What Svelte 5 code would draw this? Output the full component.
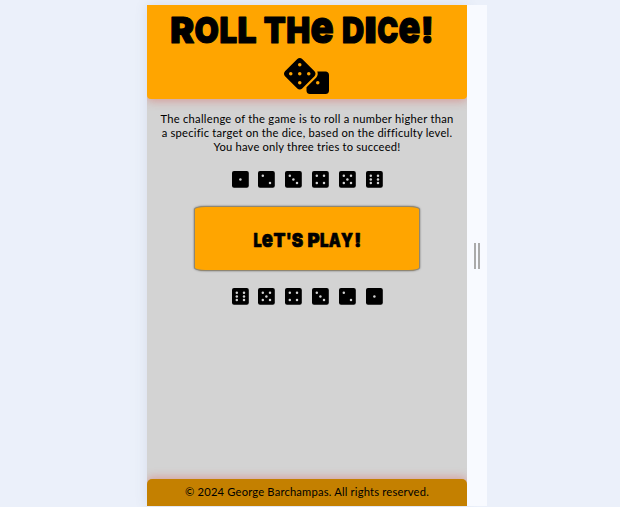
<script>
  const pips = {
    1: [[224, 256]],
    2: [[128, 160], [320, 352]],
    3: [[128, 160], [224, 256], [320, 352]],
    4: [[128, 160], [320, 160], [128, 352], [320, 352]],
    5: [[128, 160], [320, 160], [224, 256], [128, 352], [320, 352]],
    6: [[128, 160], [320, 160], [128, 256], [320, 256], [128, 352], [320, 352]],
  };
  const up = [1, 2, 3, 4, 5, 6];
  const down = [6, 5, 4, 3, 2, 1];

  // glyph, left edge, advance
  const title = [
    ['R', 23.2, 24], ['O', 47.6, 24.4], ['L', 72.4, 17.6], ['L', 90.6, 19],
    ['T', 116.8, 22], ['H', 139.2, 24], ['e', 163.6, 23.2],
    ['D', 195, 22.2], ['I', 217.6, 12.2], ['C', 230.2, 21], ['e', 251.6, 21.8], ['!', 273.8, 13],
  ];
  const play = [
    ['L', 58.4, 8.2], ['e', 66.8, 11.2], ['T', 78.4, 12], ["'", 91, 5.6], ['S', 96.8, 11.4],
    ['P', 112.6, 12.2], ['L', 125, 8.6], ['A', 133.8, 12], ['Y', 146, 12], ['!', 159.2, 7],
  ];
</script>

{#snippet row(faces)}
  <div class="row">
    {#each faces as n}
      <svg viewBox="0 32 448 448" class="die">
        <rect y="32" width="448" height="448" rx="54" />
        {#each pips[n] as [x, y]}<circle cx={x} cy={y} r="33" />{/each}
      </svg>
    {/each}
  </div>
{/snippet}

<div class="stage">
  <div class="page">
    <header>
      <svg class="title" viewBox="0 0 320 48" role="img" aria-label="Roll the dice!">
        <text y="38.1">{#each title as [c, x, w]}<tspan {x} textLength={w} lengthAdjust="spacingAndGlyphs" class:low={c === 'e'}>{c}</tspan>{/each}</text>
      </svg>
      <svg class="dice" viewBox="0 0 640 512">
        <path d="M592 192H473.26c12.69 29.59 7.12 65.2-17 89.32L320 417.58V464c0 26.51 21.49 48 48 48h224c26.51 0 48-21.49 48-48V240c0-26.51-21.49-48-48-48zM433.63 189.3L258.7 14.37c-19.16-19.16-50.23-19.16-69.39 0L14.37 189.3c-19.16 19.16-19.16 50.23 0 69.39L189.3 433.63c19.16 19.16 50.23 19.16 69.39 0L433.63 258.7c19.16-19.17 19.16-50.24 0-69.4z" />
        {#each [[480, 352], [96, 224], [224, 352], [224, 224], [224, 96], [352, 224]] as [x, y]}
          <circle cx={x} cy={y} r="25" />
        {/each}
      </svg>
    </header>
    <main>
      <p>
        <span class="l1">The challenge of the game is to roll a number higher than</span>
        <span class="l2">a specific target on the dice, based on the difficulty level.</span>
        <span class="l3">You have only three tries to succeed!</span>
      </p>
      {@render row(up)}
      <button aria-label="Let's play!">
        <svg class="play" viewBox="0 0 224 62">
          <text y="38.8">{#each play as [c, x, w]}<tspan {x} textLength={w} lengthAdjust="spacingAndGlyphs" class:low={c === 'e'}>{c}</tspan>{/each}</text>
        </svg>
      </button>
      {@render row(down)}
    </main>
    <footer><span>© 2024 George Barchampas. All rights reserved.</span></footer>
  </div>
  <div class="gutter"><i></i><i></i></div>
</div>

<style>
  :global(body) { background: #ebf0fa; }
  svg { overflow: visible; }
  .stage {
    box-sizing: border-box;
    width: 620px;
    height: 507px;
    padding: 5px 0 1px 147px;
    display: flex;
    overflow: hidden;
    color: #000;
    font-family: "Lato", sans-serif;
  }
  .page {
    width: 320px;
    display: flex;
    flex-direction: column;
    background: #d3d3d3;
    box-shadow: 0 0 12px rgba(80, 90, 120, 0.13);
  }
  header {
    height: 94px;
    background: orange;
    border-radius: 0 0 4px 4px;
    box-shadow: 0 2px 10px rgba(220, 70, 60, 0.4);
    display: flex;
    flex-direction: column;
    align-items: center;
    clip-path: inset(0 0 -20px 0);
  }
  .title { width: 320px; height: 48px; margin-bottom: 4.5px; flex: none; }
  .title text, .play text {
    font-family: "Inter", sans-serif;
    font-weight: 900;
    fill: #000;
    stroke: #000;
    stroke-linejoin: round;
  }
  .title text { font-size: 35.8px; stroke-width: 1.2px; }
  .title .low { font-size: 46.5px; }
  .dice { width: 45px; height: 36px; flex: none; margin-right: 1px; }
  .dice circle { fill: orange; }
  main { flex: 1; display: flex; flex-direction: column; align-items: center; }
  p {
    margin: 13px 0 17.4px;
    font-size: 11.2px;
    line-height: 14px;
    text-align: center;
  }
  p span { display: block; white-space: nowrap; }
  .l1 { letter-spacing: 0.26px; }
  .l2 { letter-spacing: 0.21px; }
  .l3 { letter-spacing: 0.19px; }
  .row { display: flex; gap: 10px; height: 16.8px; }
  .die { width: 16.8px; height: 16.8px; }
  .die circle { fill: #d3d3d3; }
  button {
    box-sizing: border-box;
    width: 226px;
    height: 65px;
    margin: 18.3px 0 16.8px;
    padding: 0;
    border: 1px solid #8f8672;
    border-radius: 5%;
    background: orange;
    box-shadow: 0 0 2px rgba(0, 0, 0, 0.5);
  }
  .play { display: block; width: 224px; height: 62px; }
  .play text { font-size: 18.8px; stroke-width: 0.7px; }
  .play .low { font-size: 23.5px; }
  footer {
    height: 27px;
    background: #c48000;
    border-radius: 5px 5px 0 0;
    box-shadow: 0 -2px 8px rgba(220, 70, 60, 0.35);
    font-size: 11.2px;
    line-height: 26px;
    text-align: center;
    letter-spacing: 0.18px;
    clip-path: inset(-20px 0 0 0);
  }
  .gutter {
    width: 20px;
    background: #f8faff;
    display: flex;
    gap: 2px;
    align-items: center;
    justify-content: center;
  }
  .gutter i { width: 2px; height: 26px; background: #aaa; }
</style>
